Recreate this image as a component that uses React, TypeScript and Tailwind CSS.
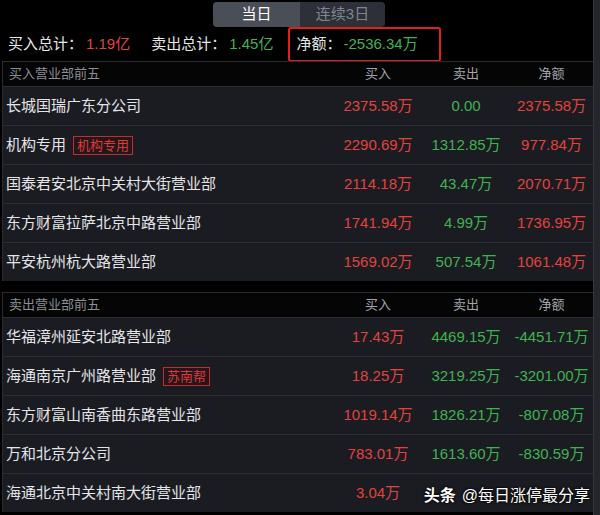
import React from "react";

type Row = {
  name: string;
  tag?: string;
  buy: string;
  sell: string;
  net: string;
  netUp: boolean;
};

const buyRows: Row[] = [
  { name: "长城国瑞广东分公司", buy: "2375.58万", sell: "0.00", net: "2375.58万", netUp: true },
  { name: "机构专用", tag: "机构专用", buy: "2290.69万", sell: "1312.85万", net: "977.84万", netUp: true },
  { name: "国泰君安北京中关村大街营业部", buy: "2114.18万", sell: "43.47万", net: "2070.71万", netUp: true },
  { name: "东方财富拉萨北京中路营业部", buy: "1741.94万", sell: "4.99万", net: "1736.95万", netUp: true },
  { name: "平安杭州杭大路营业部", buy: "1569.02万", sell: "507.54万", net: "1061.48万", netUp: true },
];

const sellRows: Row[] = [
  { name: "华福漳州延安北路营业部", buy: "17.43万", sell: "4469.15万", net: "-4451.71万", netUp: false },
  { name: "海通南京广州路营业部", tag: "苏南帮", buy: "18.25万", sell: "3219.25万", net: "-3201.00万", netUp: false },
  { name: "东方财富山南香曲东路营业部", buy: "1019.14万", sell: "1826.21万", net: "-807.08万", netUp: false },
  { name: "万和北京分公司", buy: "783.01万", sell: "1613.60万", net: "-830.59万", netUp: false },
  { name: "海通北京中关村南大街营业部", buy: "3.04万", sell: "", net: "", netUp: false },
];

function Section({ title, rows }: { title: string; rows: Row[] }) {
  return (
    <div className="border-l border-[#2a2c31] flex flex-col">
      {/* header */}
      <div className="h-[25px] flex items-center bg-[#050505] border-t border-[#2a2c31] text-[13px] text-[#8c8f96]">
        <div className="flex-1 pl-[6px]">{title}</div>
        <div className="w-[88px] text-center text-[#a3a6ad]">买入</div>
        <div className="w-[88px] text-center text-[#a3a6ad]">卖出</div>
        <div className="w-[83px] text-center text-[#a3a6ad]">净额</div>
      </div>
      {rows.map((r) => (
        <div
          key={r.name}
          className="h-[39px] flex items-center bg-[#1b1c21] border-t border-[#2c2e34] text-[15px]"
        >
          <div className="flex-1 pl-[3px] flex items-center gap-[7px] text-[#e4e5e8] whitespace-nowrap">
            <span>{r.name}</span>
            {r.tag && (
              <span className="text-[13px] leading-[17px] px-[3px] border border-[#b8302f] text-[#dc3b3a] bg-[#26161a]">
                {r.tag}
              </span>
            )}
          </div>
          <div className="w-[88px] text-center text-[#e2433e] whitespace-nowrap">{r.buy}</div>
          <div className="w-[88px] text-center text-[#3fb352] whitespace-nowrap">{r.sell}</div>
          <div
            className={`w-[83px] text-center whitespace-nowrap ${r.netUp ? "text-[#e2433e]" : "text-[#3fb352]"}`}
          >
            {r.net}
          </div>
        </div>
      ))}
    </div>
  );
}

export default function App() {
  return (
    <div
      className="relative w-[600px] h-[515px] bg-black overflow-hidden flex"
      style={{ fontFamily: '"Liberation Sans", "Noto Sans CJK SC", sans-serif' }}
    >
      <div className="flex-1 pl-[2px] flex flex-col">
        {/* Tabs */}
        <div className="h-[27px] flex items-end pl-[211px]">
          <div className="flex h-[25px] rounded-[4px] overflow-hidden text-[15px]">
            <div className="w-[87px] flex items-center justify-center bg-[#4a4e57] text-white">当日</div>
            <div className="w-[85px] flex items-center justify-center bg-[#2d3038] text-[#7f858f]">连续3日</div>
          </div>
        </div>

        {/* Totals */}
        <div className="h-[34px] flex items-center text-[15px] text-[#e6e6e6] whitespace-nowrap">
          <div className="pl-[6px] flex items-center">
            <span>买入总计：</span>
            <span className="text-[#e2433e] ml-[3px]">1.19亿</span>
          </div>
          <div className="ml-[21px] flex items-center">
            <span>卖出总计：</span>
            <span className="text-[#3fb352] ml-[3px]">1.45亿</span>
          </div>
          <div className="ml-[15px] h-[35px] w-[153px] flex items-center pl-[6px] border-2 border-[#e01f1f] rounded-[3px]">
            <span>净额：</span>
            <span className="text-[#3fb352] ml-[2px]">-2536.34万</span>
          </div>
        </div>

        <Section title="买入营业部前五" rows={buyRows} />
        <div className="h-[11px]" />
        <Section title="卖出营业部前五" rows={sellRows} />
      </div>

      {/* scrollbar strip */}
      <div className="w-[7px] h-full bg-[#24262b] border-l border-[#33353b]" />

      {/* watermark */}
      <div
        className="absolute right-[10px] top-[484px] text-[16px] text-white whitespace-nowrap"
        style={{ textShadow: "0 0 3px #000, 0 0 2px #000" }}
      >
        <span className="font-bold">头条</span>
        <span className="ml-[6px]">@每日涨停最分享</span>
      </div>
    </div>
  );
}
